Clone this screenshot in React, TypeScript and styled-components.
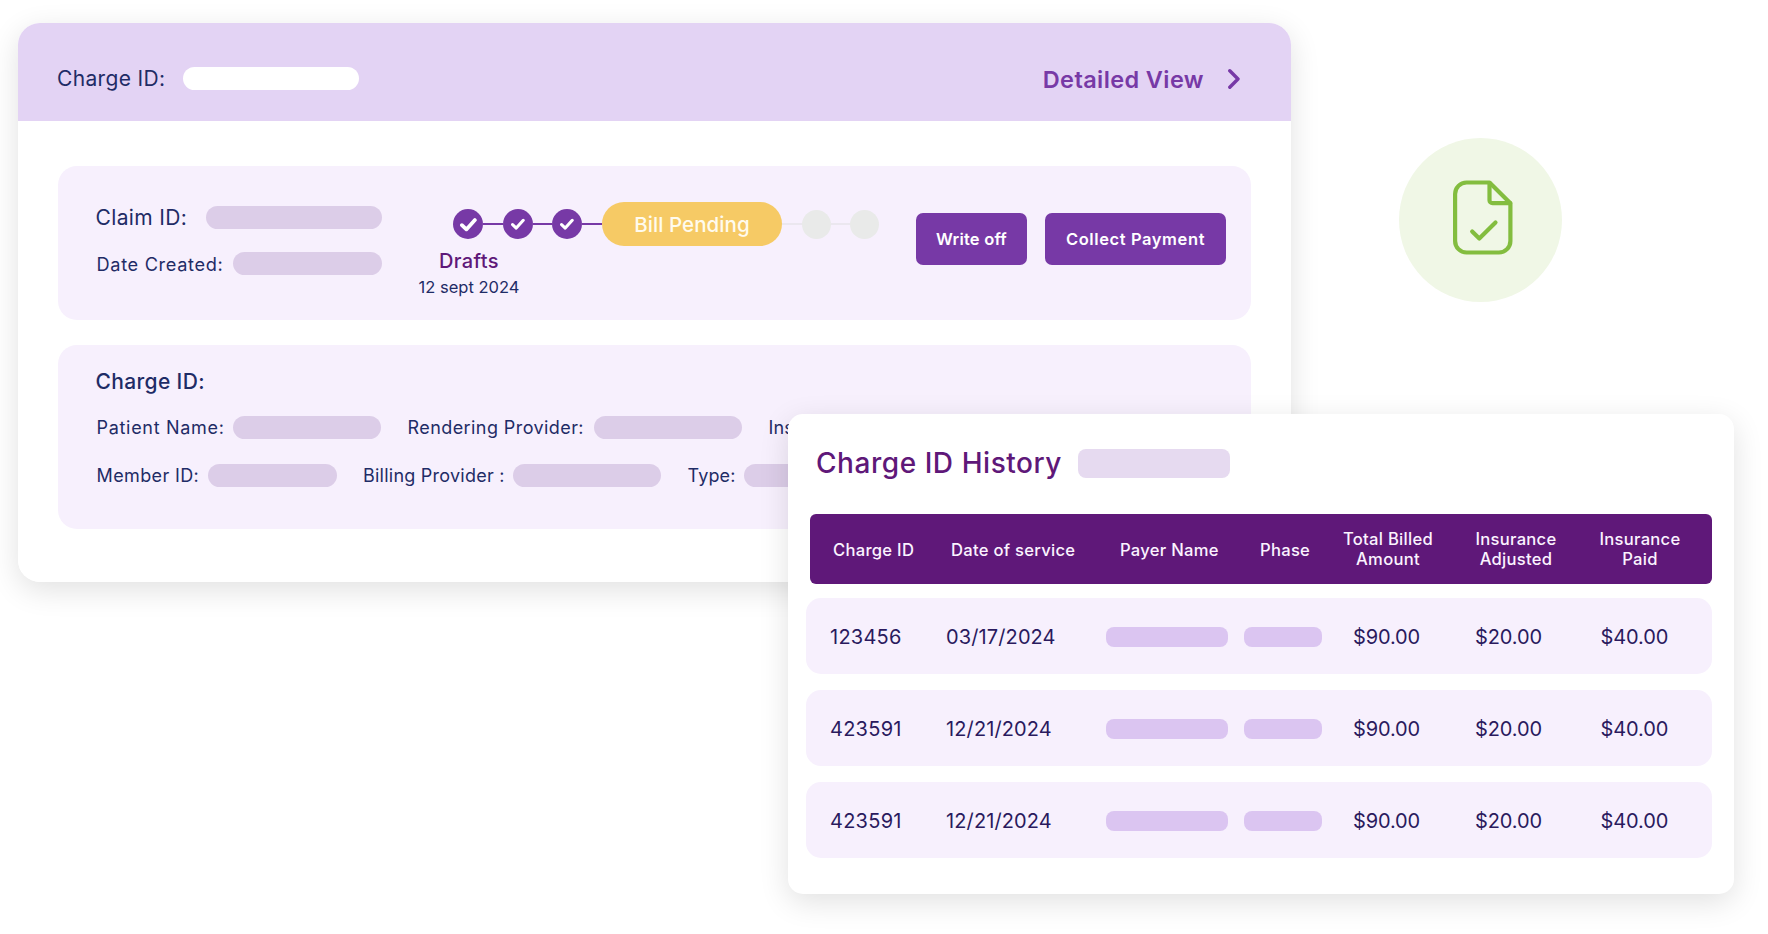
import * as React from 'react';
import styled, { createGlobalStyle } from 'styled-components';

const COLORS = {
  NAVY: '#1f2c66',
  INK: '#2a1a5e',
  PURPLE: '#7739a6',
  DEEP_PURPLE: '#5f1879',
  HEADER_BG: '#e3d3f4',
  PANEL_BG: '#f7f0fd',
  PILL: '#dccde8',
  CELL_PILL: '#dbc5f1',
  YELLOW: '#f6ca65',
  IDLE: '#e9eae9',
  GREEN: '#83bd3f',
  GREEN_BG: '#f0f7e6'
};

const GlobalStyle = createGlobalStyle`
  * {
    box-sizing: border-box;
  }
  body {
    margin: 0;
    background: #fff;
    font-family: Inter, 'Open Sans', sans-serif;
  }
`;

const Root = styled.div`
  position: relative;
  width: 1768px;
  height: 934px;
  padding: 23px 0 0 17.5px;
  display: flex;
  align-items: flex-start;
  overflow: hidden;
`;

const ChargeCard = styled.div`
  flex: none;
  width: 1273px;
  height: 559px;
  border-radius: 22px;
  background: #fff;
  overflow: hidden;
`;

const CardShadow = styled.div`
  flex: none;
  border-radius: 22px;
  box-shadow: 0 8px 30px rgba(0, 0, 0, 0.12);
`;

const CardHeader = styled.div`
  display: flex;
  align-items: center;
  height: 98px;
  padding: 13px 50.5px 0 39.5px;
  background: ${COLORS.HEADER_BG};
`;

interface TextProps {
  $size: number;
  $weight?: number;
  $width?: number;
  $spacing?: number;
  $drop?: number;
  $color?: string;
}
const Text = styled.span<TextProps>`
  flex: none;
  width: ${props => (props.$width ? `${props.$width}px` : 'auto')};
  padding-top: ${props => props.$drop || 0}px;
  font-size: ${props => props.$size}px;
  font-weight: ${props => props.$weight || 400};
  letter-spacing: ${props => props.$spacing || 0}px;
  color: ${props => props.$color || COLORS.NAVY};
  line-height: 24px;
  white-space: nowrap;
`;

interface PillProps {
  $width: number;
  $color?: string;
}
const Pill = styled.div<PillProps>`
  flex: none;
  width: ${props => props.$width}px;
  height: 23px;
  border-radius: 11.5px;
  background: ${props => props.$color || COLORS.PILL};
`;

const DetailedLink = styled.a`
  display: flex;
  align-items: center;
  margin-left: auto;
  gap: 24px;
`;

const CardBody = styled.div`
  display: flex;
  flex-direction: column;
  gap: 25px;
  padding: 45px 40px 53px;
`;

const ClaimPanel = styled.div`
  display: flex;
  align-items: flex-start;
  height: 154px;
  padding-left: 38px;
  border-radius: 19px;
  background: ${COLORS.PANEL_BG};
`;

const ClaimFields = styled.div`
  display: flex;
  flex-direction: column;
  gap: 23px;
  width: 324.5px;
  padding-top: 40px;
`;

const Field = styled.div`
  display: flex;
  align-items: center;
  height: 23px;
`;

const DateField = styled(Field)`
  padding-left: 1px;
`;

const Progress = styled.div`
  display: flex;
  flex-direction: column;
  width: 496px;
  padding-top: 36px;
`;

const Steps = styled.div`
  display: flex;
  align-items: center;
  height: 44px;
  padding-left: 33px;
`;

const StepDone = styled.div`
  display: flex;
  align-items: center;
  justify-content: center;
  width: 30px;
  height: 30px;
  border-radius: 50%;
  background: ${COLORS.PURPLE};
`;

const StepIdle = styled.div`
  width: 29px;
  height: 29px;
  border-radius: 50%;
  background: ${COLORS.IDLE};
`;

const StepLine = styled.div<{ $width: number; $idle?: boolean }>`
  width: ${props => props.$width}px;
  height: 2px;
  background: ${props => (props.$idle ? '#ebe7ef' : COLORS.PURPLE)};
`;

const StepCurrent = styled.div`
  display: flex;
  align-items: center;
  justify-content: center;
  width: 180px;
  height: 44px;
  border-radius: 22px;
  background: ${COLORS.YELLOW};
`;

const StepCaption = styled.div`
  display: flex;
  flex-direction: column;
  align-items: center;
  width: 98px;
  gap: 2px;
  padding-top: 3px;
`;

const Actions = styled.div`
  display: flex;
  gap: 18px;
  padding-top: 47px;
`;

const ActionButton = styled.button<{ $width: number }>`
  display: flex;
  align-items: center;
  justify-content: center;
  width: ${props => props.$width}px;
  height: 52px;
  padding: 0;
  border: none;
  border-radius: 7px;
  background: ${COLORS.PURPLE};
  font-family: inherit;
`;

const DetailPanel = styled.div`
  display: flex;
  flex-direction: column;
  height: 184px;
  padding: 25px 0 0 38px;
  border-radius: 19px;
  background: ${COLORS.PANEL_BG};
  overflow: hidden;
`;

const DetailRow = styled.div`
  display: flex;
  align-items: center;
  gap: 26.5px;
  height: 23px;
  margin-top: 25px;
  padding-left: 1px;

  &:nth-child(2) {
    margin-top: 22px;
  }
`;

const Badge = styled.div`
  display: flex;
  align-items: center;
  justify-content: center;
  width: 163px;
  height: 164px;
  margin: 115px 0 0 108.5px;
  padding: 0 0 5px 4px;
  border-radius: 50%;
  background: ${COLORS.GREEN_BG};
`;

// lies over the lower right part of the charge card
const HistoryCard = styled.div`
  position: absolute;
  left: 788px;
  top: 414px;
  width: 946px;
  height: 480px;
  padding: 35px 22px 0 18px;
  border-radius: 15px;
  background: #fff;
  box-shadow: 0 8px 30px rgba(0, 0, 0, 0.12);
`;

const HistoryTitle = styled.div`
  display: flex;
  align-items: center;
  height: 29px;
  padding-left: 10px;
`;

const TitleText = styled.h2`
  width: 262px;
  margin: 0;
  padding-bottom: 2px;
  font-size: 28px;
  font-weight: 500;
  letter-spacing: 0.55px;
  line-height: 28px;
  color: ${COLORS.DEEP_PURPLE};
  white-space: nowrap;
`;

const TitlePill = styled.div`
  width: 152px;
  height: 29px;
  border-radius: 8px;
  background: #e6daf0;
`;

const TableGrid = styled.div`
  display: grid;
  grid-template-columns: 116px 160px 138px 109px 122px 125.5px 1fr;
  align-items: center;
`;

const TableHead = styled(TableGrid)`
  grid-template-columns: 118px 169px 140px 72px 112px 144px 104px;
  height: 70px;
  margin: 36px 0 0 4px;
  padding-left: 23px;
  border-radius: 6px;
  background: ${COLORS.DEEP_PURPLE};
`;

const HeadCell = styled.div<{ $center?: boolean }>`
  padding-top: ${props => (props.$center ? 0 : 2)}px;
  font-size: 16.6px;
  font-weight: 500;
  letter-spacing: 0.28px;
  line-height: 20px;
  color: #fbf3ff;
  white-space: pre;
  text-align: ${props => (props.$center ? 'center' : 'left')};
`;

const TableRow = styled(TableGrid)`
  height: 76px;
  margin-top: 16px;
  padding: 2px 0 0 24px;
  border-radius: 15px;
  background: ${COLORS.PANEL_BG};

  &:nth-child(3) {
    margin-top: 14px;
  }
`;

const CellPill = styled.div<{ $width: number }>`
  width: ${props => props.$width}px;
  height: 20px;
  border-radius: 8px;
  background: ${COLORS.CELL_PILL};
`;

const CheckIcon = ({ size }: { size: number }) => (
  <svg width={size} height={size} viewBox="0 0 16 16" fill="none">
    <path
      d="M1.8 8.6 6 12.6 14 3.8"
      stroke="#fff"
      strokeWidth="3.5"
      strokeLinecap="round"
      strokeLinejoin="round"
    />
  </svg>
);

const ChevronIcon = () => (
  <svg width="12" height="20" viewBox="0 0 12 20" fill="none">
    <path
      d="M1.8 1.8 10 10 1.8 18.2"
      stroke={COLORS.PURPLE}
      strokeWidth="3.4"
      strokeLinecap="round"
      strokeLinejoin="round"
    />
  </svg>
);

const DocumentIcon = () => (
  <svg width="60" height="75" viewBox="0 0 60 75" fill="none">
    <g
      stroke={COLORS.GREEN}
      strokeWidth="4.2"
      strokeLinecap="round"
      strokeLinejoin="round"
    >
      <path d="M57.4 23.2V61a11.5 11.5 0 0 1-11.5 11.5H13.6a11.5 11.5 0 0 1-11.5-11.5V14a11.5 11.5 0 0 1 11.5-11.5H36.5L57.4 23.2" />
      <path d="M36.5 3V20.2a3 3 0 0 0 3 3H57" />
      <path d="M19.2 51.5 26.3 58.5 42.5 42.5" />
    </g>
  </svg>
);

const DETAIL_ROWS = [
  [
    { label: 'Patient Name:', width: 136, pill: 148.5, spacing: 0.7 },
    { label: 'Rendering Provider:', width: 186, pill: 148.5, spacing: 0.42 },
    { label: 'Insurance:', width: 96, pill: 148.5, spacing: 0.2 }
  ],
  [
    { label: 'Member ID:', width: 111, pill: 129, spacing: 0.38 },
    { label: 'Billing Provider :', width: 149.5, pill: 148.5, spacing: 0.24 },
    { label: 'Type:', width: 56, pill: 148.5, spacing: 0.15 }
  ]
];

const HEADINGS = [
  { text: 'Charge ID' },
  { text: 'Date of service' },
  { text: 'Payer Name' },
  { text: 'Phase' },
  { text: 'Total Billed\nAmount', center: true },
  { text: 'Insurance\nAdjusted', center: true },
  { text: 'Insurance\nPaid', center: true }
];

const HISTORY = [
  { id: '123456', date: '03/17/2024' },
  { id: '423591', date: '12/21/2024' },
  { id: '423591', date: '12/21/2024' }
];

function ClaimProgress() {
  return (
    <Progress>
      <Steps>
        <StepDone>
          <CheckIcon size={17} />
        </StepDone>
        <StepLine $width={19.5} />
        <StepDone>
          <CheckIcon size={14} />
        </StepDone>
        <StepLine $width={19.5} />
        <StepDone>
          <CheckIcon size={14} />
        </StepDone>
        <StepLine $width={20} />
        <StepCurrent>
          <Text $size={20.5} $weight={500} $spacing={0.05} $drop={2} $color="#fffbee">
            Bill Pending
          </Text>
        </StepCurrent>
        <StepLine $width={20} $idle />
        <StepIdle />
        <StepLine $width={19} $idle />
        <StepIdle />
      </Steps>
      <StepCaption>
        <Text $size={20} $weight={500} $spacing={0.4} $color={COLORS.DEEP_PURPLE}>
          Drafts
        </Text>
        <Text $size={16.5}>12 sept 2024</Text>
      </StepCaption>
    </Progress>
  );
}

function ChargeHistory() {
  const cellProps = { $size: 20, $color: COLORS.INK };
  return (
    <HistoryCard>
      <HistoryTitle>
        <TitleText>Charge ID History</TitleText>
        <TitlePill />
      </HistoryTitle>
      <TableHead>
        {HEADINGS.map((h, i) => (
          <HeadCell key={i} $center={h.center}>
            {h.text}
          </HeadCell>
        ))}
      </TableHead>
      {HISTORY.map((row, i) => (
        <TableRow key={i}>
          <Text {...cellProps} $spacing={0.25}>
            {row.id}
          </Text>
          <Text {...cellProps} $spacing={0.12}>
            {row.date}
          </Text>
          <CellPill $width={122} />
          <CellPill $width={78} />
          <Text {...cellProps} $spacing={-0.12}>
            $90.00
          </Text>
          <Text {...cellProps} $spacing={-0.12}>
            $20.00
          </Text>
          <Text {...cellProps} $spacing={-0.12}>
            $40.00
          </Text>
        </TableRow>
      ))}
    </HistoryCard>
  );
}

export default function App() {
  return (
    <Root>
      <GlobalStyle />
      <CardShadow>
        <ChargeCard>
          <CardHeader>
            <Text $size={21} $width={126} $spacing={0.35} $drop={1}>
              Charge ID:
            </Text>
            <Pill $width={175.5} $color="#fff" />
            <DetailedLink>
              <Text
                $size={23.5}
                $weight={600}
                $spacing={0.4}
                $drop={2}
                $color={COLORS.PURPLE}
              >
                Detailed View
              </Text>
              <ChevronIcon />
            </DetailedLink>
          </CardHeader>
          <CardBody>
            <ClaimPanel>
              <ClaimFields>
                <Field>
                  <Text $size={21} $width={110.5} $spacing={0.35} $drop={1}>
                    Claim ID:
                  </Text>
                  <Pill $width={175.5} />
                </Field>
                <DateField>
                  <Text $size={18.2} $width={136.5} $spacing={0.66}>
                    Date Created:
                  </Text>
                  <Pill $width={148.5} />
                </DateField>
              </ClaimFields>
              <ClaimProgress />
              <Actions>
                <ActionButton $width={111}>
                  <Text $size={16.5} $weight={600} $spacing={0.2} $color="#fff">
                    Write off
                  </Text>
                </ActionButton>
                <ActionButton $width={181}>
                  <Text $size={16.5} $weight={600} $spacing={0.6} $color="#fff">
                    Collect Payment
                  </Text>
                </ActionButton>
              </Actions>
            </ClaimPanel>
            <DetailPanel>
              <Text $size={21} $weight={500} $spacing={0.35}>
                Charge ID:
              </Text>
              {DETAIL_ROWS.map((fields, i) => (
                <DetailRow key={i}>
                  {fields.map(f => (
                    <Field key={f.label}>
                      <Text $size={18} $width={f.width} $spacing={f.spacing}>
                        {f.label}
                      </Text>
                      <Pill $width={f.pill} />
                    </Field>
                  ))}
                </DetailRow>
              ))}
            </DetailPanel>
          </CardBody>
        </ChargeCard>
      </CardShadow>
      <Badge>
        <DocumentIcon />
      </Badge>
      <ChargeHistory />
    </Root>
  );
}
